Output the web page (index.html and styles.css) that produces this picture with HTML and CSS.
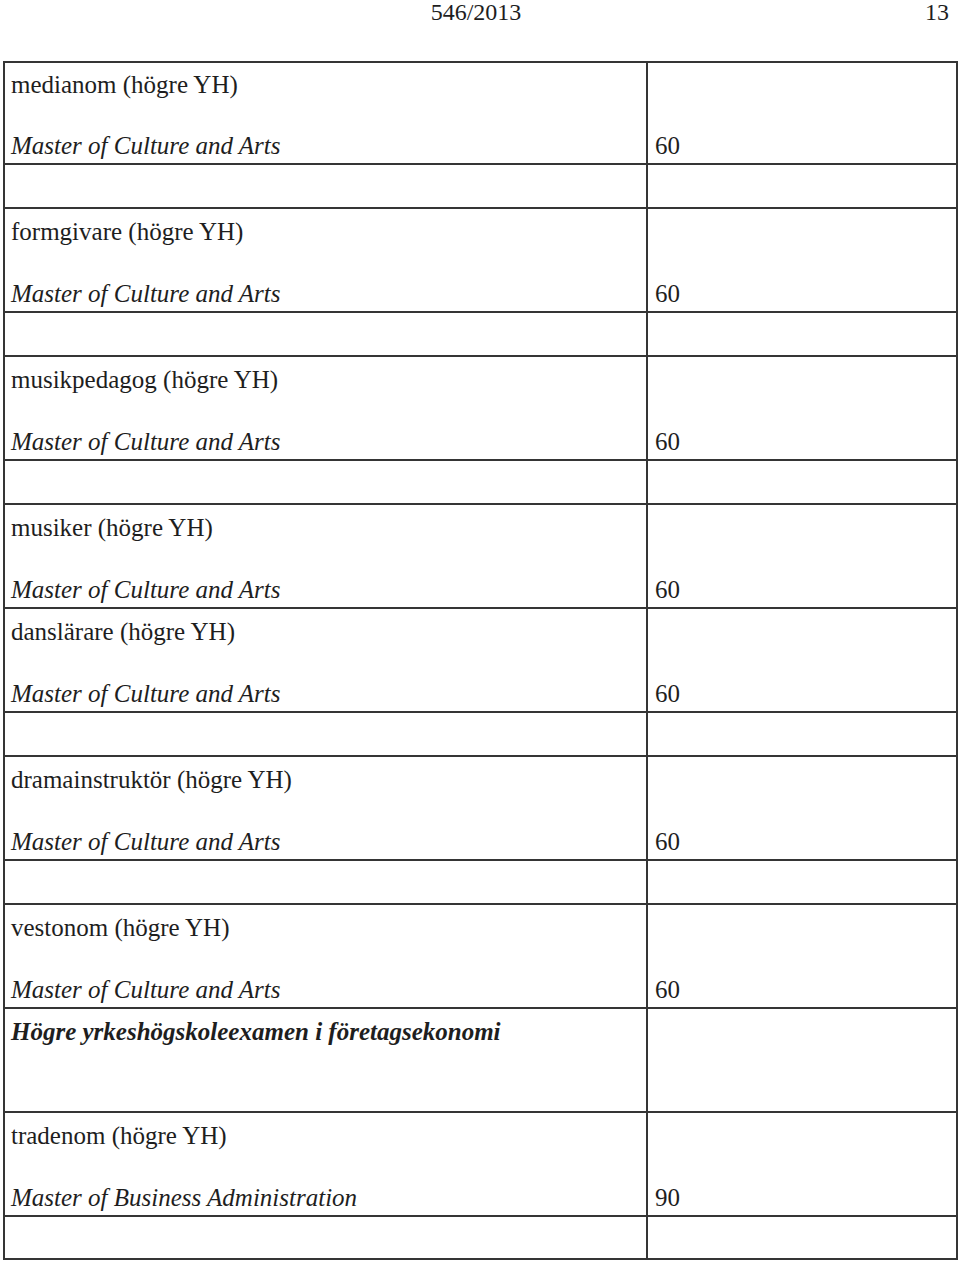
FILE: index.html
```html
<!DOCTYPE html>
<html lang="sv">
<head>
<meta charset="utf-8">
<title>546/2013</title>
<link rel="stylesheet" href="styles.css">
</head>
<body>
<header class="page-head">
  <span class="doc-no">546/2013</span>
  <span class="page-no">13</span>
</header>
<table class="degrees">
  <colgroup><col class="c-name"><col class="c-credits"></colgroup>
  <tbody>
    <tr class="first"><td><div class="cell"><div class="title">medianom (högre YH)</div><div class="degree">Master of Culture and Arts</div></div></td><td><div class="cell credits">60</div></td></tr>
    <tr><td><div class="gap"></div></td><td></td></tr>
    <tr><td><div class="cell"><div class="title">formgivare (högre YH)</div><div class="degree">Master of Culture and Arts</div></div></td><td><div class="cell credits">60</div></td></tr>
    <tr><td><div class="gap"></div></td><td></td></tr>
    <tr><td><div class="cell"><div class="title">musikpedagog (högre YH)</div><div class="degree">Master of Culture and Arts</div></div></td><td><div class="cell credits">60</div></td></tr>
    <tr><td><div class="gap"></div></td><td></td></tr>
    <tr><td><div class="cell"><div class="title">musiker (högre YH)</div><div class="degree">Master of Culture and Arts</div></div></td><td><div class="cell credits">60</div></td></tr>
    <tr><td><div class="cell"><div class="title">danslärare (högre YH)</div><div class="degree">Master of Culture and Arts</div></div></td><td><div class="cell credits">60</div></td></tr>
    <tr><td><div class="gap"></div></td><td></td></tr>
    <tr><td><div class="cell"><div class="title">dramainstruktör (högre YH)</div><div class="degree">Master of Culture and Arts</div></div></td><td><div class="cell credits">60</div></td></tr>
    <tr><td><div class="gap"></div></td><td></td></tr>
    <tr><td><div class="cell"><div class="title">vestonom (högre YH)</div><div class="degree">Master of Culture and Arts</div></div></td><td><div class="cell credits">60</div></td></tr>
    <tr><td><div class="cell"><div class="section">Högre yrkeshögskoleexamen i företagsekonomi</div></div></td><td><div class="cell credits"></div></td></tr>
    <tr><td><div class="cell"><div class="title">tradenom (högre YH)</div><div class="degree">Master of Business Administration</div></div></td><td><div class="cell credits">90</div></td></tr>
    <tr class="last"><td><div class="gap"></div></td><td></td></tr>
  </tbody>
</table>
</body>
</html>
```
FILE: styles.css
```css
html, body {
  margin: 0;
  padding: 0;
  background: #fff;
}
body {
  font-family: "Liberation Serif", "Times New Roman", serif;
  font-size: 25px;
  line-height: 28px;
  color: #1e1e1e;
  width: 960px;
}
.page-head {
  position: relative;
  height: 61px;
  font-size: 24px;
  line-height: 24px;
}
.doc-no {
  display: block;
  text-align: center;
  margin-left: -8px;
}
.page-no {
  position: absolute;
  right: 11px;
  top: 0;
}
.degrees {
  border-collapse: collapse;
  margin-left: 3px;
  width: 953px;
  table-layout: fixed;
}
.c-name { width: 643px; }
.c-credits { width: 310px; }
.degrees td {
  border: 2px solid #353535;
  padding: 0;
  vertical-align: top;
}
.cell {
  box-sizing: border-box;
  height: 102px;
  display: flex;
  flex-direction: column;
  justify-content: space-between;
  padding: 9px 0 3px 6px;
  overflow: hidden;
}
.first .cell {
  height: 100px;
  padding-top: 8px;
}
.gap {
  height: 42px;
}
.last .gap {
  height: 41px;
}
.title, .degree, .section {
  white-space: nowrap;
}
.degree {
  font-style: italic;
}
.section {
  font-style: italic;
  font-weight: bold;
}
.credits {
  justify-content: flex-end;
  padding-left: 7px;
}
```
